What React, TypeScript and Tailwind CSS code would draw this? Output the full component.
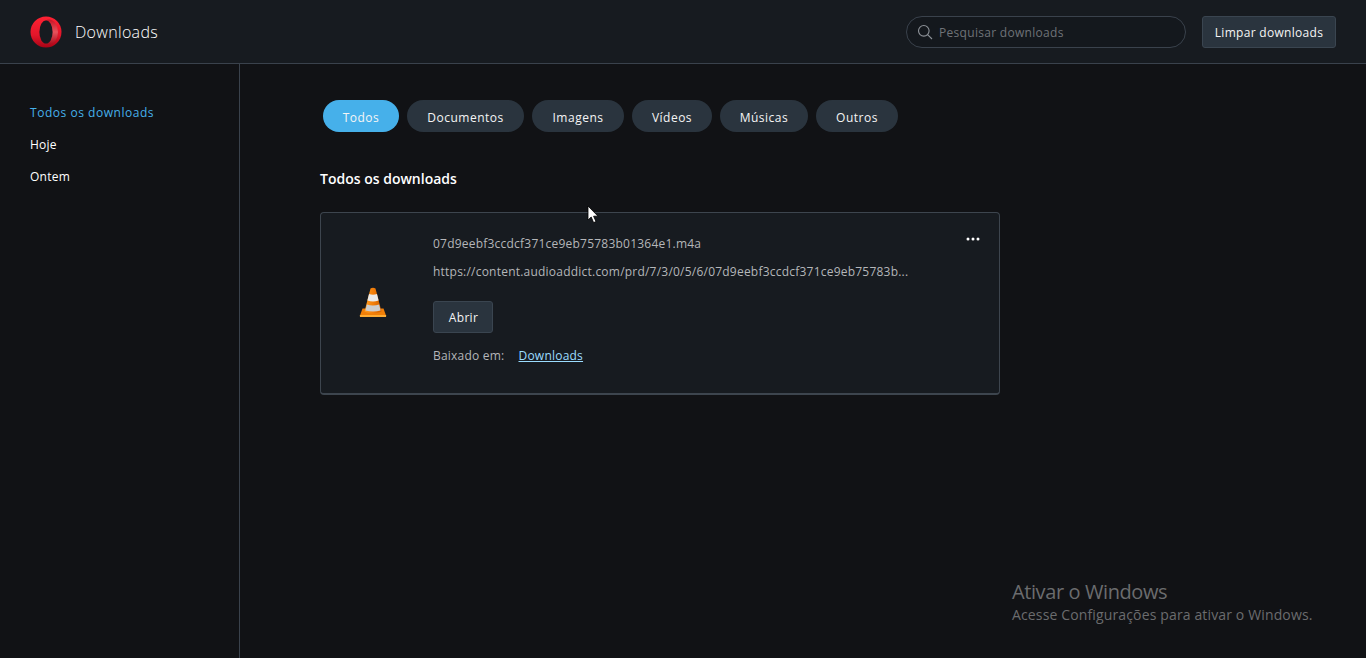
import React from "react";

const font = "font-['Open_Sans','Noto_Sans',sans-serif]";

function OperaLogo() {
  return (
    <svg width="32" height="32" viewBox="0 0 32 32">
      <defs>
        <linearGradient id="op" x1="0" y1="0" x2="0" y2="1">
          <stop offset="0" stopColor="#ff2233" />
          <stop offset="0.6" stopColor="#e3162a" />
          <stop offset="1" stopColor="#a80416" />
        </linearGradient>
        <linearGradient id="op2" x1="0" y1="0" x2="0" y2="1">
          <stop offset="0" stopColor="#c81425" />
          <stop offset="0.5" stopColor="#e8525c" />
          <stop offset="1" stopColor="#a80c1c" />
        </linearGradient>
      </defs>
      <circle cx="16" cy="16" r="15.5" fill="url(#op)" />
      <ellipse cx="19" cy="16" rx="9" ry="12.5" fill="url(#op2)" />
      <ellipse cx="16" cy="16" rx="6.6" ry="11.6" fill="#171b20" />
    </svg>
  );
}

function VlcCone() {
  return (
    <svg width="28" height="32" viewBox="0 0 28 32">
      <defs>
        <linearGradient id="cone" x1="0" y1="0" x2="1" y2="0">
          <stop offset="0" stopColor="#ff9d20" />
          <stop offset="0.55" stopColor="#f27c08" />
          <stop offset="1" stopColor="#cf6000" />
        </linearGradient>
      </defs>
      <path d="M1 29.5 L3.5 22.5 H24.5 L27 29.5 Q27 31 25.5 31 H2.5 Q1 31 1 29.5 Z" fill="#f07f08" />
      <path d="M0.8 29 H27.2 L27 31 H1 Z" fill="#ffac33" />
      <path d="M11.5 2.5 Q14 0.8 16.5 2.5 L22.5 25.5 Q14 29.5 5.5 25.5 Z" fill="url(#cone)" />
      <path d="M10 8 Q14 9.5 18 8 L19.6 14.5 Q14 16.3 8.4 14.5 Z" fill="#eaeaea" />
      <path d="M7.9 18.5 Q14 20.5 20.1 18.5 L21.6 24.5 Q14 26.5 6.4 24.5 Z" fill="#cdcdcd" />
    </svg>
  );
}

function Cursor() {
  return (
    <svg width="12" height="19" viewBox="0 0 12 19">
      <path d="M1 1 V15 L4.2 12 L6.6 17.6 L9 16.6 L6.6 11.2 H11 Z" fill="#fff" stroke="#000" strokeWidth="0.8" />
    </svg>
  );
}

const pills = [
  { label: "Todos", w: "w-[76px]", active: true },
  { label: "Documentos", w: "w-[117px]" },
  { label: "Imagens", w: "w-[92px]" },
  { label: "Vídeos", w: "w-[80px]" },
  { label: "Músicas", w: "w-[88px]" },
  { label: "Outros", w: "w-[82px]" },
];

export default function App() {
  return (
    <div className={`${font} relative flex h-[658px] w-[1366px] flex-col overflow-hidden bg-[#111215] text-[12px] text-white`}>
      <header className="flex h-[64px] shrink-0 items-center border-b border-[#3a424c] bg-[#171b20] pl-[30px] pr-[30px]">
        <OperaLogo />
        <h1 className="ml-[13px] text-[16px] font-light tracking-[0.32px] text-white">Downloads</h1>
        <div className="ml-auto flex h-[32px] w-[280px] items-center rounded-full border border-[#3a424c] bg-[#14181d] pl-[10px]">
          <svg width="16" height="16" viewBox="0 0 16 16" fill="none" stroke="#8d9298" strokeWidth="1.1">
            <circle cx="6.8" cy="6.8" r="5.3" />
            <path d="M10.6 10.6 L15 15" />
          </svg>
          <span className="ml-[6px] pt-[2px] tracking-[0.3px] text-[#6f7378]">Pesquisar downloads</span>
        </div>
        <button className="ml-[16px] h-[32px] w-[134px] rounded-[3px] border border-[#3a4550] bg-[#2a343e] pt-[2px] tracking-[0.3px] text-[#f5f5f5]">
          Limpar downloads
        </button>
      </header>
      <div className="flex min-h-0 flex-1">
        <aside className="w-[240px] shrink-0 border-r border-[#3a424c] pl-[30px] pt-[40px]">
          <ul className="flex flex-col gap-[14px] leading-[18px] tracking-[0.53px]">
            <li className="text-[#46b0ea]">Todos os downloads</li>
            <li className="tracking-[0.25px]">Hoje</li>
            <li className="tracking-[0.25px]">Ontem</li>
          </ul>
        </aside>
        <main className="flex-1 pl-[80px] pt-[36px]">
          <div className="flex gap-[8px] pl-[3px]">
            {pills.map((p) => (
              <button
                key={p.label}
                className={`h-[32px] ${p.w} rounded-full pt-[4px] tracking-[0.5px] ${p.active ? "bg-[#46b0ea]" : "bg-[#2a343e]"} text-[#f5f5f5]`}
              >
                {p.label}
              </button>
            ))}
          </div>
          <h2 className="mt-[37px] text-[14px] font-semibold leading-[20px] text-white">Todos os downloads</h2>
          <section className="mt-[23px] flex h-[183px] w-[680px] rounded-[4px] border border-b-2 border-[#3d454e] bg-[#171b20]">
            <div className="flex w-[112px] shrink-0 items-center justify-center pb-[2px] pr-[8px]">
              <VlcCone />
            </div>
            <div className="relative min-w-0 flex-1 pt-[22px] text-[#b4b6b9]">
              <div className="leading-[18px] tracking-[0.22px]">07d9eebf3ccdcf371ce9eb75783b01364e1.m4a</div>
              <div className="mt-[10px] leading-[18px] tracking-[0.22px]">
                https://content.audioaddict.com/prd/7/3/0/5/6/07d9eebf3ccdcf371ce9eb75783b...
              </div>
              <button className="mt-[20px] block h-[32px] w-[60px] rounded-[3px] border border-[#3a4550] bg-[#2a343e] pl-[1px] pt-[1px] tracking-[0.3px] text-[#f5f5f5]">
                Abrir
              </button>
              <div className="mt-[14px] flex leading-[18px] tracking-[0.22px]">
                <span>Baixado em:</span>
                <span className="ml-[14px] text-[#9bdcff] underline">Downloads</span>
              </div>
              <div className="absolute right-[20px] top-[25px] flex gap-[3px]">
                <span className="h-[2px] w-[2px] rounded-full bg-white ring-[0.5px] ring-white" />
                <span className="h-[2px] w-[2px] rounded-full bg-white ring-[0.5px] ring-white" />
                <span className="h-[2px] w-[2px] rounded-full bg-white ring-[0.5px] ring-white" />
              </div>
            </div>
          </section>
        </main>
      </div>
      <div className="absolute left-[587px] top-[205px]">
        <Cursor />
      </div>
      <div className="absolute left-[1012px] top-[580px] text-[#6b6c6e]">
        <div className="text-[20px] leading-[24px] tracking-[-0.4px]">Ativar o Windows</div>
        <div className="text-[14px] leading-[22px] tracking-[0.14px]">Acesse Configurações para ativar o Windows.</div>
      </div>
    </div>
  );
}
